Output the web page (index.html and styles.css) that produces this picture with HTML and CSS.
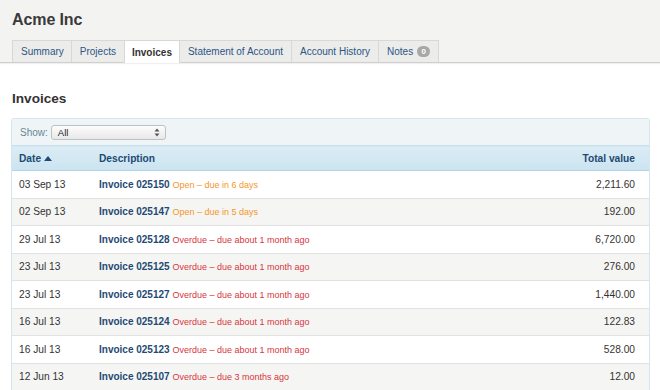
FILE: index.html
```html
<!DOCTYPE html>
<html>
<head>
<meta charset="utf-8">
<link rel="stylesheet" href="styles.css">
</head>
<body>
<div class="top">
  <h1 class="company">Acme Inc</h1>
  <ul class="tabs">
    <li class="tab">Summary</li>
    <li class="tab">Projects</li>
    <li class="tab active">Invoices</li>
    <li class="tab">Statement of Account</li>
    <li class="tab">Account History</li>
    <li class="tab">Notes <span class="badge">0</span></li>
  </ul>
</div>
<div class="content">
  <h2 class="heading">Invoices</h2>
  <div class="panel">
    <div class="filter">
      <span class="show-label">Show:</span>
      <div class="select"><span>All</span><svg class="arrows" width="6" height="9" viewBox="0 0 6 9"><path d="M3 0.5 L5.5 3.5 H0.5 Z M3 8.5 L5.5 5.5 H0.5 Z" fill="#555"/></svg></div>
    </div>
    <table class="grid">
      <thead>
        <tr><th class="c-date">Date <svg width="8" height="5" viewBox="0 0 8 5"><path d="M4 0 L8 5 H0 Z" fill="#1f4a73"/></svg></th><th class="c-desc">Description</th><th class="c-total">Total value</th></tr>
      </thead>
      <tbody>
        <tr><td class="c-date">03 Sep 13</td><td class="c-desc"><b>Invoice 025150</b> <span class="open">Open – due in 6 days</span></td><td class="c-total">2,211.60</td></tr>
        <tr><td class="c-date">02 Sep 13</td><td class="c-desc"><b>Invoice 025147</b> <span class="open">Open – due in 5 days</span></td><td class="c-total">192.00</td></tr>
        <tr><td class="c-date">29 Jul 13</td><td class="c-desc"><b>Invoice 025128</b> <span class="overdue">Overdue – due about 1 month ago</span></td><td class="c-total">6,720.00</td></tr>
        <tr><td class="c-date">23 Jul 13</td><td class="c-desc"><b>Invoice 025125</b> <span class="overdue">Overdue – due about 1 month ago</span></td><td class="c-total">276.00</td></tr>
        <tr><td class="c-date">23 Jul 13</td><td class="c-desc"><b>Invoice 025127</b> <span class="overdue">Overdue – due about 1 month ago</span></td><td class="c-total">1,440.00</td></tr>
        <tr><td class="c-date">16 Jul 13</td><td class="c-desc"><b>Invoice 025124</b> <span class="overdue">Overdue – due about 1 month ago</span></td><td class="c-total">122.83</td></tr>
        <tr><td class="c-date">16 Jul 13</td><td class="c-desc"><b>Invoice 025123</b> <span class="overdue">Overdue – due about 1 month ago</span></td><td class="c-total">528.00</td></tr>
        <tr><td class="c-date">12 Jun 13</td><td class="c-desc"><b>Invoice 025107</b> <span class="overdue">Overdue – due 3 months ago</span></td><td class="c-total">12.00</td></tr>
      </tbody>
    </table>
  </div>
</div>
</body>
</html>
```
FILE: styles.css
```css
* { box-sizing: border-box; }
html, body { margin: 0; padding: 0; }
body {
  font-family: "Liberation Sans", Arial, sans-serif;
  font-size: 10.2px;
  color: #333;
  background: #fff;
  width: 660px;
  height: 390px;
  overflow: hidden;
}
.top {
  background: #f3f3f2;
  padding: 9px 0 0 12px;
  border-bottom: 1px solid #cfcfcf;
  box-shadow: 0 1px 1px rgba(0,0,0,0.06);
}
.company {
  margin: 0;
  font-size: 16px;
  font-weight: bold;
  color: #3a3a3a;
  line-height: 21px;
  letter-spacing: -0.1px;
}
.tabs {
  list-style: none;
  margin: 10px 0 -1px 0;
  padding: 0;
  display: flex;
}
.tab {
  height: 22px;
  line-height: 21px;
  padding: 0 8px;
  background: #ececeb;
  border: 1px solid #d8d8d8;
  border-bottom: none;
  margin-right: -1px;
  color: #2d5684;
  font-size: 10px;
  display: flex;
  align-items: center;
  gap: 4px;
}
.tab:first-child { padding: 0 7px 0 8px; }
.tab.active {
  background: #fff;
  color: #333;
  font-weight: bold;
  height: 23px;
  position: relative;
  z-index: 1;
  padding: 0 7px;
}
.badge {
  display: inline-block;
  width: 13px;
  height: 11px;
  line-height: 11px;
  border-radius: 6px;
  background: #a8a8a8;
  color: #fff;
  font-size: 8px;
  font-weight: bold;
  text-align: center;
}
.content {
  padding: 0 10px 0 11px;
}
.heading {
  margin: 27px 0 0 1px;
  font-size: 13.6px;
  font-weight: bold;
  color: #333;
  line-height: 17px;
}
.panel {
  margin-top: 11px;
  border: 1px solid #d6e6ee;
  border-bottom: none;
  border-radius: 3px 3px 0 0;
}
.filter {
  height: 26px;
  background: #eff5f7;
  display: flex;
  align-items: center;
  padding-left: 8px;
  gap: 3px;
}
.show-label { color: #6a8494; font-size: 10px; }
.select {
  width: 115px;
  height: 15px;
  border: 1px solid #b9c2c7;
  border-radius: 3px;
  background: linear-gradient(#fdfdfd, #e8e8e8);
  display: flex;
  align-items: center;
  justify-content: space-between;
  padding: 0 5px 0 6px;
  font-size: 9.5px;
  color: #222;
}
.grid {
  width: 100%;
  border-collapse: collapse;
}
.grid th {
  height: 25px;
  background: linear-gradient(#dbecf5, #cbe4f1);
  border-top: 1px solid #c9e0ec;
  border-bottom: 1px solid #b5d3e3;
  color: #1f4a73;
  font-weight: bold;
  font-size: 10.2px;
  text-align: left;
  padding: 0;
}
.grid th svg { vertical-align: 1px; }
.grid td {
  height: 27.5px;
  border-bottom: 1px solid #e2e2e2;
  padding: 0;
  font-size: 10.2px;
  color: #333;
}
.grid tbody tr:nth-child(even) td { background: #f5f5f4; }
.c-date { width: 87px; padding-left: 7px !important; }
.c-total { text-align: right !important; padding-right: 14px !important; }
.c-desc b { color: #1f4a73; font-weight: bold; font-size: 10px; }
.open { color: #f4962c; font-size: 9px; }
.overdue { color: #d8353f; font-size: 9px; }
```
